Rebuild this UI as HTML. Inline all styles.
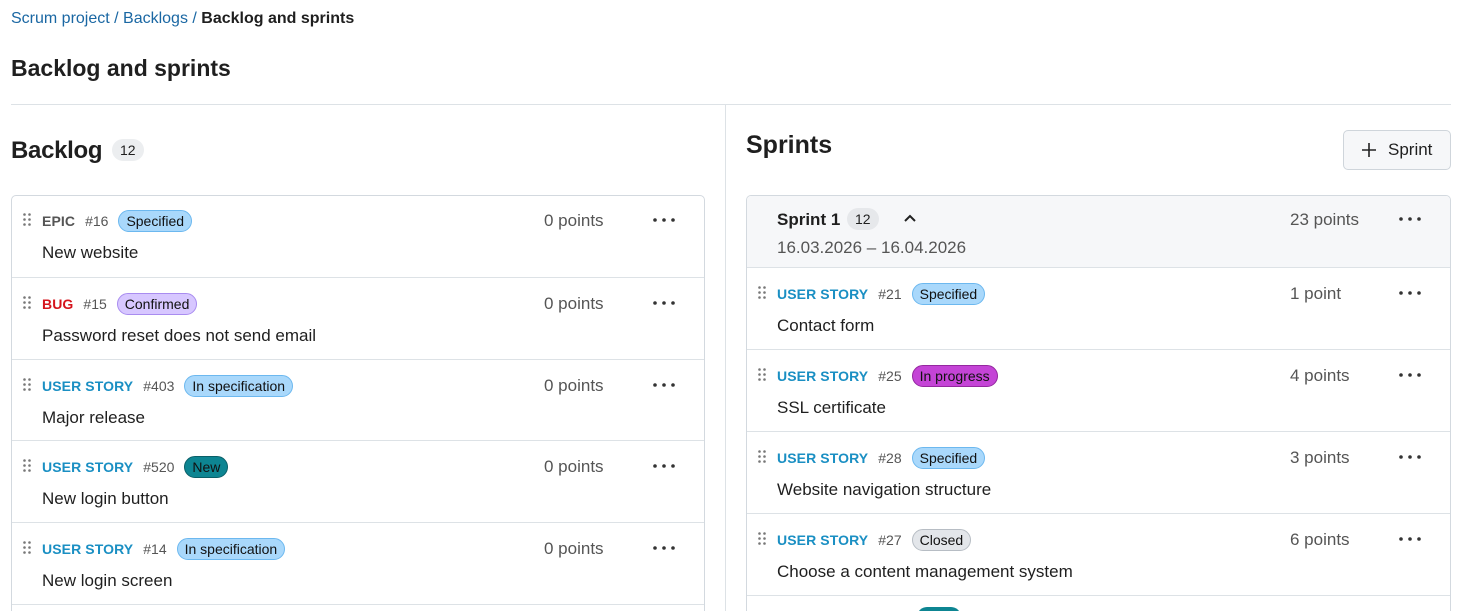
<!DOCTYPE html>
<html><head><meta charset="utf-8"><style>
*{box-sizing:border-box;margin:0;padding:0}
html,body{width:1466px;height:611px;overflow:hidden}
body{background:#fff;font-family:"Liberation Sans",sans-serif;color:#1f1f1f;position:relative}
.a{position:absolute;white-space:nowrap}
.crumb{top:10px;left:11px;font-size:16px;color:#1a67a3}
.crumb b{color:#1f1f1f}
h1{position:absolute;top:55px;left:11px;font-size:23px;font-weight:bold;color:#1f1f1f}
.hr{position:absolute;top:104px;left:11px;width:1440px;height:1px;background:#dde2e6}
.vr{position:absolute;top:105px;left:725px;width:1px;height:506px;background:#dde2e6}
.card{position:absolute;border:1px solid #d3d9df;border-radius:5px;overflow:hidden}
.row{position:absolute;left:0;right:0;height:82px;border-top:1px solid #dde2e6}
.grip{position:absolute;left:11px;top:18px;width:8px;height:13px}
.meta{position:absolute;left:30px;top:15px;font-size:14px;color:#555;display:flex;align-items:center;gap:10px}
.t{font-weight:bold;letter-spacing:0.1px}
.us{color:#1a8fc3}.bug{color:#d5141c}.ep{color:#555}
.b{font-size:14px;color:#111;border-radius:12px;padding:2px 7px;border:1px solid}
.sp{background:#a9d8fb;border-color:#6cb8ef}
.cf{background:#d7c7ff;border-color:#a98cf0}
.nw{background:#0d8592;border-color:#0a5f68}
.ip{background:#c444d6;border-color:#94289f;color:#111}
.cl{background:#e3e6ea;border-color:#b7bdc4}
.title{position:absolute;left:30px;top:48px;font-size:17px;color:#1f1f1f}
.pts{position:absolute;top:16px;font-size:17px;color:#555}
.dots{position:absolute;top:23px;width:22px;height:4px}
</style></head><body>
<div class="a crumb">Scrum project&nbsp;/&nbsp;Backlogs&nbsp;/&nbsp;<b>Backlog and sprints</b></div>
<h1>Backlog and sprints</h1>
<div class="hr"></div><div class="vr"></div>

<div class="a" style="top:137px;left:11px;font-size:24px;font-weight:bold;letter-spacing:-0.3px">Backlog</div>
<div class="a" style="top:139px;left:112px;font-size:14px;background:#eceef0;border-radius:12px;padding:3px 8px">12</div>

<div class="a" style="top:131px;left:746px;font-size:25px;font-weight:bold">Sprints</div>
<div class="a" style="top:130px;left:1343px;width:108px;height:40px;border:1px solid #cfd5db;border-radius:5px;background:#f6f7f9;font-size:17px;display:flex;align-items:center;padding-left:18px"><svg width="14" height="14" style="margin-right:12px"><path d="M7 0V14M0 7H14" stroke="#222" stroke-width="1.6"/></svg>Sprint</div>

<svg width="0" height="0" style="position:absolute"><defs>
<g id="g" fill="#777"><circle cx="1.5" cy="1.5" r="1.3"/><circle cx="6.5" cy="1.5" r="1.3"/><circle cx="1.5" cy="6.5" r="1.3"/><circle cx="6.5" cy="6.5" r="1.3"/><circle cx="1.5" cy="11.5" r="1.3"/><circle cx="6.5" cy="11.5" r="1.3"/></g>
<g id="d" fill="#333"><circle cx="2" cy="2" r="1.8"/><circle cx="11" cy="2" r="1.8"/><circle cx="20" cy="2" r="1.8"/></g>
</defs></svg>

<div class="card" style="left:11px;top:195px;width:694px;height:425px">
 <div class="row" style="top:-1px;border-top:none"><svg class="grip"><use href="#g"/></svg><div class="meta"><span class="t ep">EPIC</span>#16<span class="b sp">Specified</span></div><div class="title">New website</div><div class="pts" style="left:532px">0 points</div><svg class="dots" style="left:641px"><use href="#d"/></svg></div>
 <div class="row" style="top:81px"><svg class="grip"><use href="#g"/></svg><div class="meta"><span class="t bug">BUG</span>#15<span class="b cf">Confirmed</span></div><div class="title">Password reset does not send email</div><div class="pts" style="left:532px">0 points</div><svg class="dots" style="left:641px"><use href="#d"/></svg></div>
 <div class="row" style="top:163px"><svg class="grip"><use href="#g"/></svg><div class="meta"><span class="t us">USER STORY</span>#403<span class="b sp">In specification</span></div><div class="title">Major release</div><div class="pts" style="left:532px">0 points</div><svg class="dots" style="left:641px"><use href="#d"/></svg></div>
 <div class="row" style="top:244px"><svg class="grip"><use href="#g"/></svg><div class="meta"><span class="t us">USER STORY</span>#520<span class="b nw">New</span></div><div class="title">New login button</div><div class="pts" style="left:532px">0 points</div><svg class="dots" style="left:641px"><use href="#d"/></svg></div>
 <div class="row" style="top:326px"><svg class="grip"><use href="#g"/></svg><div class="meta"><span class="t us">USER STORY</span>#14<span class="b sp">In specification</span></div><div class="title">New login screen</div><div class="pts" style="left:532px">0 points</div><svg class="dots" style="left:641px"><use href="#d"/></svg></div>
 <div class="row" style="top:408px"></div>
</div>

<div class="card" style="left:746px;top:195px;width:705px;height:425px">
 <div style="position:absolute;left:0;top:0;right:0;height:72px;background:#f6f7f9"></div>
 <div class="a" style="left:30px;top:14px;font-size:17px;font-weight:bold">Sprint 1</div>
 <div class="a" style="left:100px;top:12px;font-size:14px;background:#e6e8eb;border-radius:12px;padding:3px 8px">12</div>
 <svg class="a" style="left:157px;top:18px" width="12" height="8"><path d="M1 7L6 2L11 7" stroke="#222" stroke-width="2" fill="none"/></svg>
 <div class="a" style="left:30px;top:42px;font-size:17px;color:#555">16.03.2026 – 16.04.2026</div>
 <div class="pts" style="left:543px;top:14px">23 points</div><svg class="dots" style="left:652px;top:21px"><use href="#d"/></svg>
 <div class="row" style="top:71px"><svg class="grip"><use href="#g"/></svg><div class="meta"><span class="t us">USER STORY</span>#21<span class="b sp">Specified</span></div><div class="title">Contact form</div><div class="pts" style="left:543px">1 point</div><svg class="dots" style="left:652px"><use href="#d"/></svg></div>
 <div class="row" style="top:153px"><svg class="grip"><use href="#g"/></svg><div class="meta"><span class="t us">USER STORY</span>#25<span class="b ip">In progress</span></div><div class="title">SSL certificate</div><div class="pts" style="left:543px">4 points</div><svg class="dots" style="left:652px"><use href="#d"/></svg></div>
 <div class="row" style="top:235px"><svg class="grip"><use href="#g"/></svg><div class="meta"><span class="t us">USER STORY</span>#28<span class="b sp">Specified</span></div><div class="title">Website navigation structure</div><div class="pts" style="left:543px">3 points</div><svg class="dots" style="left:652px"><use href="#d"/></svg></div>
 <div class="row" style="top:317px"><svg class="grip"><use href="#g"/></svg><div class="meta"><span class="t us">USER STORY</span>#27<span class="b cl">Closed</span></div><div class="title">Choose a content management system</div><div class="pts" style="left:543px">6 points</div><svg class="dots" style="left:652px"><use href="#d"/></svg></div>
 <div class="row" style="top:399px"><div class="a" style="left:170px;top:11px;width:44px;height:20px;border-radius:12px;background:#0d8592"></div></div>
</div>
</body></html>
